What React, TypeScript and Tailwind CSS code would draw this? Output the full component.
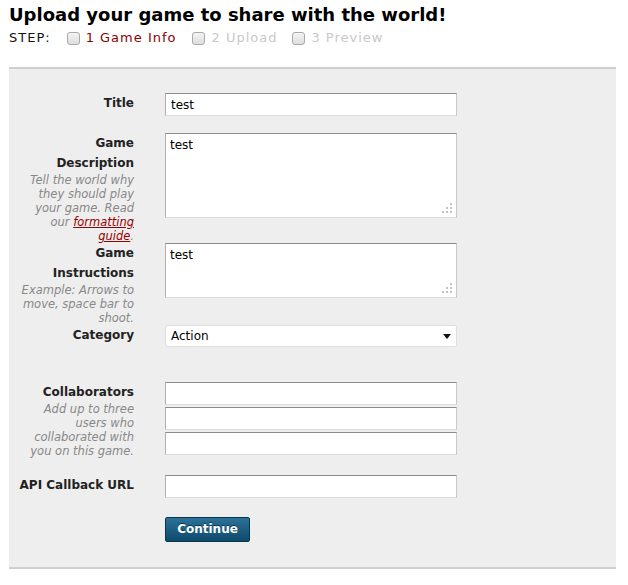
const font = "font-['Verdana','DejaVu_Sans',sans-serif]";

function StepBox() {
  return (
    <span className="inline-block h-[13px] w-[13px] rounded-[3px] border border-[#a9a9a9] bg-gradient-to-b from-[#f4f4f4] to-[#dedede]" />
  );
}

function Grip() {
  // little dotted resize grip in the bottom right corner of a textarea
  const dots = [
    [8, 0],
    [4, 4],
    [8, 4],
    [0, 8],
    [4, 8],
    [8, 8],
  ];
  return (
    <svg className="pointer-events-none absolute bottom-[5px] right-[5px]" width="10" height="10" viewBox="0 0 10 10">
      {dots.map(([x, y]) => (
        <rect key={`${x}-${y}`} x={x} y={y} width="2" height="2" fill="#c4c4c4" />
      ))}
    </svg>
  );
}

const fieldBorder =
  "border border-t-[#8c8c8c] border-l-[#b0b0b0] border-r-[#c8c8c8] border-b-[#dcdcdc] bg-white";

function Label({ title, children }: { title: React.ReactNode; children?: React.ReactNode }) {
  return (
    <div className="flex w-[125px] shrink-0 flex-col items-end text-right">
      <div className="text-[12px] font-bold leading-[20px] text-[#222]">{title}</div>
      {children && <div className="w-[116px] text-[11.5px] italic leading-[14px] text-[#888]">{children}</div>}
    </div>
  );
}

export default function App() {
  return (
    <div className={`${font} min-h-[585px] bg-white`}>
      <div className="px-[9px] pt-[2px]">
        <h1 className="text-[18px] font-bold leading-[26px] text-black">
          Upload your game to share with the world!
        </h1>
        <div className="flex items-center text-[13px] leading-[20px] tracking-[1px]">
          <span className="text-[#111]">STEP:</span>
          <span className="ml-[16px] flex items-center gap-[6px] text-[#8b0000]">
            <StepBox />1 Game Info
          </span>
          <span className="ml-[16px] flex items-center gap-[6px] text-[#c8c8c8]">
            <StepBox />2 Upload
          </span>
          <span className="ml-[15px] flex items-center gap-[6px] text-[#c8c8c8]">
            <StepBox />3 Preview
          </span>
        </div>
      </div>

      <div className="mx-[9px] mt-[19px] w-[607px] border-y-2 border-[#cfcfcf] bg-[#eeeeee] pt-[24px] pb-[25px]">
        {/* Title */}
        <div className="flex gap-[31px]">
          <Label title="Title" />
          <input
            defaultValue="test"
            className={`${fieldBorder} h-[23px] w-[292px] px-[5px] text-[12px] text-black outline-none`}
          />
        </div>

        {/* Description */}
        <div className="mt-[17px] flex gap-[31px]">
          <Label title={<>Game<br />Description</>}>
            Tell the world why they should play your game. Read our{" "}
            <a href="#" className="text-[#990000] underline">formatting guide</a>.
          </Label>
          <div className="relative h-[85px] w-[292px]">
            <textarea
              defaultValue="test"
              className={`${fieldBorder} block h-full w-full resize-none px-[4px] py-[4px] text-[12px] leading-[15px] text-black outline-none`}
            />
            <Grip />
          </div>
        </div>

        {/* Instructions */}
        <div className="flex gap-[31px]">
          <Label title={<>Game<br />Instructions</>}>
            Example: Arrows to move, space bar to shoot.
          </Label>
          <div className="relative h-[55px] w-[292px]">
            <textarea
              defaultValue="test"
              className={`${fieldBorder} block h-full w-full resize-none px-[4px] py-[4px] text-[12px] leading-[15px] text-black outline-none`}
            />
            <Grip />
          </div>
        </div>

        {/* Category */}
        <div className="flex gap-[31px]">
          <Label title="Category" />
          <div className="relative h-[22px] w-[292px]">
            <select
              defaultValue="Action"
              className="block h-full w-full appearance-none rounded-[2px] border border-[#e0e0e0] bg-white px-[5px] text-[12px] text-black outline-none"
            >
              <option>Action</option>
              <option>Adventure</option>
              <option>Puzzle</option>
            </select>
            <svg className="pointer-events-none absolute right-[6px] top-[9px]" width="8" height="5" viewBox="0 0 8 5">
              <path d="M0 0h8L4 5z" fill="#111" />
            </svg>
          </div>
        </div>

        {/* Collaborators */}
        <div className="mt-[35px] flex gap-[31px]">
          <Label title="Collaborators">
            Add up to three users who collaborated with you on this game.
          </Label>
          <div className="flex w-[292px] flex-col gap-[2px]">
            {[0, 1, 2].map((i) => (
              <input key={i} className={`${fieldBorder} h-[23px] w-full px-[5px] text-[12px] outline-none`} />
            ))}
          </div>
        </div>

        {/* API */}
        <div className="mt-[17px] flex gap-[31px]">
          <Label title="API Callback URL" />
          <input className={`${fieldBorder} h-[23px] w-[292px] px-[5px] text-[12px] outline-none`} />
        </div>

        <div className="mt-[18px] pl-[156px]">
          <button className="h-[25px] w-[85px] rounded-[2px] border border-[#0a3550] bg-gradient-to-b from-[#2d7298] to-[#0d4b6c] text-[12px] font-bold text-white [text-shadow:0_-1px_0_#0a3550]">
            Continue
          </button>
        </div>
      </div>
    </div>
  );
}
